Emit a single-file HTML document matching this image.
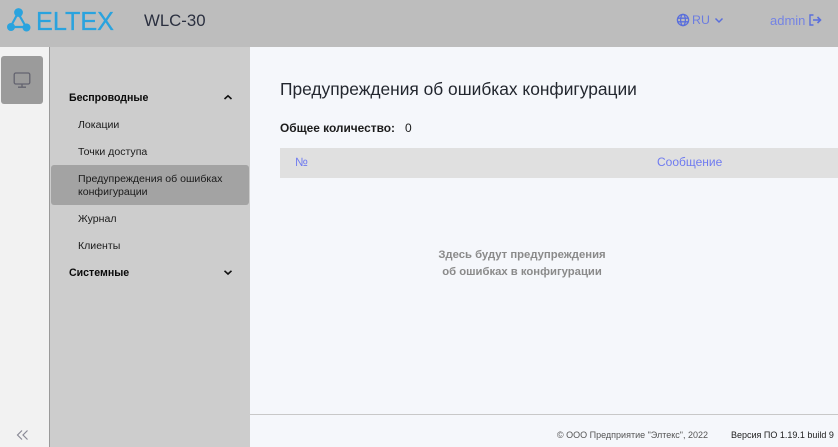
<!DOCTYPE html>
<html lang="ru">
<head>
<meta charset="utf-8">
<title>WLC-30</title>
<style>
html,body{margin:0;padding:0}
body{width:838px;height:447px;position:relative;overflow:hidden;background:#f5f7fb;font-family:"Liberation Sans",Arial,sans-serif;}
.a{position:absolute;white-space:nowrap}
.top{left:0;top:0;width:838px;height:47px;background:#bdbdbd}
.rail{left:0;top:47px;width:49px;height:400px;background:#f2f2f2}
.railline{left:49px;top:47px;width:1px;height:400px;background:#9a9a9a}
.side{left:50px;top:47px;width:200px;height:400px;background:#cdcdcd}
.railbtn{left:1px;top:56px;width:42px;height:48px;background:#9b9b9b;border-radius:3px}
.active{left:51px;top:165px;width:198px;height:40px;background:#a3a3a3;border-radius:3px}
.m{font-size:10.56px;line-height:13px;color:#1a1a1a}
.b{font-size:10.6px;line-height:13px;color:#0a0a0a;font-weight:bold}
.thead{left:280px;top:148px;width:558px;height:30px;background:#e0e0e0}
.link{color:#6f7bf0;font-size:12px;line-height:14px}
.empty{left:400px;width:244px;text-align:center;font-size:11.3px;line-height:14px;font-weight:bold;color:#8a8a8a}
.fline{left:250px;top:414px;width:588px;height:1px;background:#c8c8c8}
</style>
</head>
<body>
<div class="a top"></div>
<div class="a rail"></div>
<div class="a railline"></div>
<div class="a side"></div>
<div class="a railbtn"></div>
<div class="a active"></div>

<svg class="a" style="left:0;top:0" width="125" height="45" viewBox="0 0 125 45">
  <g stroke="#2aa3de" stroke-width="2.2" fill="none">
    <path d="M18 13L11 26M18 13L26 27M11 27L26 27"/>
  </g>
  <g fill="#2aa3de">
    <circle cx="18.5" cy="12.5" r="4.4"/>
    <circle cx="11" cy="27" r="4"/>
    <circle cx="26.5" cy="27.5" r="4"/>
  </g>
  <text x="36" y="30" font-family="Liberation Sans, sans-serif" font-size="26" fill="#2aa3de" stroke="#2aa3de" stroke-width="0.3" textLength="78" lengthAdjust="spacingAndGlyphs">ELTEX</text>
</svg>

<div class="a" style="left:144px;top:11px;font-size:16.8px;line-height:20px;color:#2b3040">WLC-30</div>

<svg class="a" style="left:676px;top:13px" width="14" height="14" viewBox="0 0 14 14" fill="none" stroke="#5a6fdc" stroke-width="1.3">
  <circle cx="7" cy="7" r="5.6"/>
  <ellipse cx="7" cy="7" rx="2.4" ry="5.6"/>
  <path d="M1.4 5.2H12.6M1.4 8.8H12.6"/>
</svg>
<div class="a" style="left:692px;top:13px;font-size:12.4px;line-height:15px;color:#6b7ce0">RU</div>
<svg class="a" style="left:714px;top:17px" width="10" height="7" viewBox="0 0 10 7" fill="none" stroke="#5a6fdc" stroke-width="1.5"><path d="M1.5 1.5L5 5L8.5 1.5"/></svg>
<div class="a" style="left:770px;top:14px;font-size:13px;line-height:14px;color:#7483e4">admin</div>
<svg class="a" style="left:809px;top:14px" width="13" height="12" viewBox="0 0 13 12" fill="none" stroke="#5a6fdc" stroke-width="1.4">
  <path d="M4.5 1H1V11H4.5M4 6H10.5"/>
  <path d="M8.5 3L11.5 6L8.5 9" stroke-width="1.6"/>
</svg>

<svg class="a" style="left:13px;top:71px" width="18" height="18" viewBox="0 0 18 18" fill="none" stroke="#63636f" stroke-width="1.3">
  <rect x="1.2" y="2" width="15.6" height="11" rx="1.6"/>
  <path d="M9 13V16M5 16.2H13"/>
</svg>

<svg class="a" style="left:16px;top:429px" width="13" height="12" viewBox="0 0 13 12" fill="none" stroke="#8a8a96" stroke-width="1.2">
  <path d="M6 1.5L1.5 6L6 10.5M11.5 1.5L7 6L11.5 10.5"/>
</svg>

<div class="a b" style="left:69px;top:92px">Беспроводные</div>
<svg class="a" style="left:223px;top:94px" width="10" height="7" viewBox="0 0 10 7" fill="none" stroke="#111" stroke-width="1.6"><path d="M1.5 5L5 1.8L8.5 5"/></svg>
<div class="a m" style="left:78px;top:119px">Локации</div>
<div class="a m" style="left:78px;top:146px">Точки доступа</div>
<div class="a m" style="left:78px;top:173px">Предупреждения об ошибках<br>конфигурации</div>
<div class="a m" style="left:78px;top:213px">Журнал</div>
<div class="a m" style="left:78px;top:240px">Клиенты</div>
<div class="a b" style="left:69px;top:267px">Системные</div>
<svg class="a" style="left:223px;top:269px" width="10" height="7" viewBox="0 0 10 7" fill="none" stroke="#111" stroke-width="1.6"><path d="M1.5 1.8L5 5L8.5 1.8"/></svg>

<div class="a" style="left:280px;top:79px;font-size:17.37px;line-height:21px;color:#23272f">Предупреждения об ошибках конфигурации</div>
<div class="a" style="left:280px;top:121px;font-size:11.9px;line-height:14px;font-weight:bold;color:#1c1c1c">Общее количество:</div>
<div class="a" style="left:405px;top:121px;font-size:12px;line-height:14px;color:#1c1c1c">0</div>

<div class="a thead"></div>
<div class="a link" style="left:295px;top:155px">№</div>
<div class="a link" style="left:657px;top:155px">Сообщение</div>

<div class="a empty" style="top:248px">Здесь будут предупреждения</div>
<div class="a empty" style="top:265px">об ошибках в конфигурации</div>

<div class="a fline"></div>
<div class="a" style="left:557px;top:429px;font-size:9px;line-height:12px;color:#555">© ООО Предприятие "Элтекс", 2022</div>
<div class="a" style="left:731px;top:429px;font-size:9px;line-height:12px;color:#222">Версия ПО 1.19.1 build 9</div>
</body>
</html>
